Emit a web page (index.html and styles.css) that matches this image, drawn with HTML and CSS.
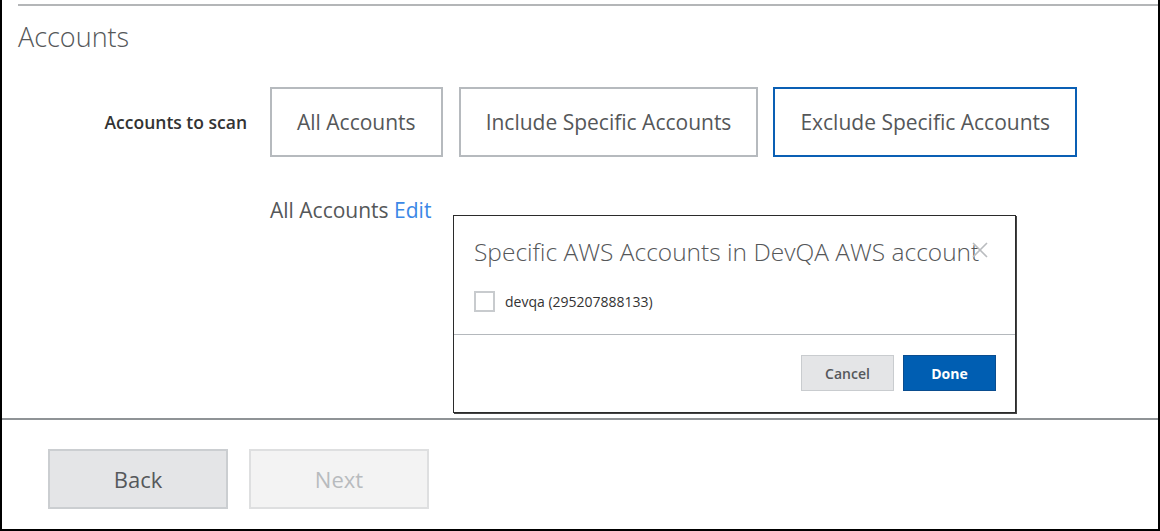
FILE: index.html
```html
<!DOCTYPE html>
<html>
<head>
<meta charset="utf-8">
<link rel="stylesheet" href="styles.css">
</head>
<body>
<div class="frame">
  <div class="main">
    <div class="section">
      <h1 class="title">Accounts</h1>
      <div class="scan-row">
        <div class="scan-label">Accounts to scan</div>
        <div class="choices">
          <button class="choice">All Accounts</button>
          <button class="choice">Include Specific Accounts</button>
          <button class="choice selected">Exclude Specific Accounts</button>
        </div>
      </div>
      <div class="summary">All Accounts <a class="edit">Edit</a></div>
    </div>
  </div>
  <div class="footer">
    <button class="nav back">Back</button>
    <button class="nav next">Next</button>
  </div>

  <div class="modal">
    <div class="modal-body">
      <div class="modal-title">Specific AWS Accounts in DevQA AWS account</div>
      <span class="close">
        <svg width="16" height="16" viewBox="0 0 16 16"><path d="M1 1 L15 15 M15 1 L1 15" stroke="#b9bcbf" stroke-width="1.6" fill="none"/></svg>
      </span>
      <label class="check-row"><span class="checkbox"></span><span class="check-text">devqa (295207888133)</span></label>
    </div>
    <div class="modal-footer">
      <button class="mbtn cancel">Cancel</button>
      <button class="mbtn done">Done</button>
    </div>
  </div>
</div>
</body>
</html>
```

FILE: styles.css
```css
* { box-sizing: border-box; }
html, body { margin: 0; padding: 0; background: #fff; }
body { font-family: "Open Sans", "Liberation Sans", sans-serif; }

.frame {
  position: relative;
  width: 1160px;
  height: 531px;
  border-left: 2px solid #000;
  border-right: 2px solid #000;
  border-bottom: 2px solid #000;
  background: #fff;
}

.main { height: 418px; padding-top: 4px; }

.section {
  margin-left: 16px;
  border-top: 2px solid #b4b6b8;
}

.title {
  margin: 0;
  padding-top: 15px;
  font-size: 27px;
  line-height: 32px;
  font-weight: 300;
  color: #555759;
}

.scan-row {
  display: flex;
  align-items: center;
  margin-top: 34px;
}

.scan-label {
  width: 230px;
  padding-right: 1px;
  text-align: right;
  font-size: 17.5px;
  font-weight: 600;
  color: #333;
}

.choices {
  display: flex;
  gap: 16px;
  margin-left: 22px;
}

.choice {
  height: 70px;
  padding: 0 25px;
  background: #fff;
  border: 2px solid #b6babe;
  font-family: "Open Sans", "Liberation Sans", sans-serif;
  font-size: 21px;
  color: #555759;
}
.choice.selected { border-color: #0a5fb4; margin-left: -1px; }

.summary {
  margin-left: 252px;
  margin-top: 38px;
  font-size: 21px;
  line-height: 30px;
  color: #555759;
}
.edit { color: #3b88e6; }

.footer {
  border-top: 2px solid #8f9396;
  padding: 29px 0 0 46px;
  display: flex;
  gap: 21px;
}

.nav {
  width: 180px;
  height: 60px;
  font-family: "Open Sans", "Liberation Sans", sans-serif;
  font-size: 22px;
  border: 2px solid #cbced1;
}
.nav.back { background: #e4e5e7; color: #55585b; }
.nav.next { background: #f3f3f3; border-color: #dedfe0; color: #b8bbbe; }

.modal {
  position: absolute;
  left: 451px;
  top: 215px;
  width: 563px;
  height: 198px;
  background: #fff;
  border: 1px solid #2b2b2b;
  box-shadow: 1px 1px 0 #444;
}

.modal-body {
  position: relative;
  padding: 18px 20px 0 20px;
  height: 119px;
  border-bottom: 1px solid #b4b8bc;
}

.modal-title {
  font-size: 24.5px;
  font-weight: 300;
  line-height: 36px;
  color: #555759;
  white-space: nowrap;
}

.close {
  position: absolute;
  left: 518px;
  top: 26px;
  width: 16px;
  height: 16px;
}
.close svg { display: block; }

.check-row {
  display: flex;
  align-items: center;
  margin-top: 21px;
}
.checkbox {
  width: 21px;
  height: 21px;
  border: 2px solid #c8cbce;
  background: #fff;
}
.check-text {
  margin-left: 10px;
  font-size: 14px;
  color: #333;
}

.modal-footer {
  display: flex;
  justify-content: flex-end;
  gap: 9px;
  padding: 20px 19px 0 0;
}

.mbtn {
  width: 93px;
  height: 36px;
  font-family: "Open Sans", "Liberation Sans", sans-serif;
  font-size: 14px;
  font-weight: 600;
  border: 1px solid #c9cccf;
}
.mbtn.cancel { background: #e4e5e7; color: #55585b; }
.mbtn.done { background: #005eb2; border-color: #0a4d8f; color: #fff; font-weight: 700; }
```
